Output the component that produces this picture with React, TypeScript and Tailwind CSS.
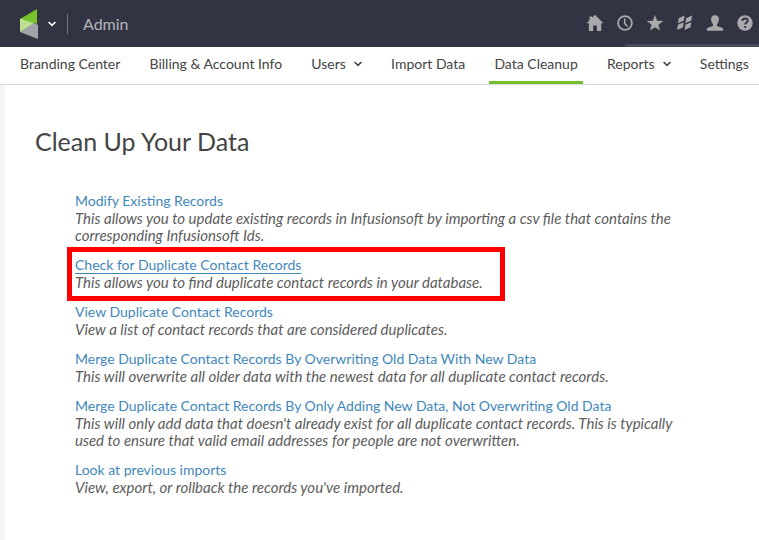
import type { ReactNode } from "react";

const navItems = [
  { label: "Branding Center" },
  { label: "Billing & Account Info" },
  { label: "Users", menu: true },
  { label: "Import Data" },
  { label: "Data Cleanup", active: true },
  { label: "Reports", menu: true },
  { label: "Settings" }
];

const actions = [
  {
    title: "Modify Existing Records",
    text: "This allows you to update existing records in Infusionsoft by importing a csv file that contains the corresponding Infusionsoft Ids."
  },
  {
    title: "Check for Duplicate Contact Records",
    text: "This allows you to find duplicate contact records in your database.",
    highlighted: true
  },
  {
    title: "View Duplicate Contact Records",
    text: "View a list of contact records that are considered duplicates."
  },
  {
    title: "Merge Duplicate Contact Records By Overwriting Old Data With New Data",
    text: "This will overwrite all older data with the newest data for all duplicate contact records."
  },
  {
    title: "Merge Duplicate Contact Records By Only Adding New Data, Not Overwriting Old Data",
    text: "This will only add data that doesn't already exist for all duplicate contact records. This is typically used to ensure that valid email addresses for people are not overwritten."
  },
  {
    title: "Look at previous imports",
    text: "View, export, or rollback the records you've imported."
  }
];

function Chevron() {
  return (
    <svg className="h-[6px] w-2 shrink-0" viewBox="0 0 8 6" fill="none" stroke="currentColor" strokeWidth="1.6" aria-hidden="true">
      <path d="M.6 1 4 4.4 7.4 1" />
    </svg>
  );
}

function Logo() {
  return (
    <svg className="h-[30px] w-[18px]" viewBox="0 0 18 30" aria-hidden="true">
      <path d="M17 0v15L0 10z" fill="#78c22b" />
      <path d="M0 23 13 14l5 1.800V30z" fill="#a3a4a9" />
      <path d="M0 9.500 14 14 0 23z" fill="#bce290" />
    </svg>
  );
}

function ToolButton({ label, children }: { label: string; children: ReactNode }) {
  return (
    <button type="button" aria-label={label} className="hover:text-white">
      <svg className="block size-[18px]" viewBox="0 0 18 18" fill="currentColor" aria-hidden="true">
        {children}
      </svg>
    </button>
  );
}

function TopBar() {
  return (
    <header className="relative flex h-[47px] items-center justify-between bg-[#323443] pl-5 pr-[5px]">
      <div className="flex items-center">
        <button type="button" aria-label="Main menu" className="flex items-center gap-[10px] text-white">
          <Logo />
          <Chevron />
        </button>
        <span className="ml-[11px] h-5 w-px bg-[#747580]" />
        <span className="ml-[15px] text-base leading-5 text-[#b5b6bc]">Admin</span>
      </div>
      <div className="flex items-center gap-3 pb-px text-[#a9a9ab]">
        <ToolButton label="Home">
          <path d="M9 .8 17.400 9.200h-2.200V17h-4.300v-5.500H7.200V17H2.900V9.200H.6L3.500 6.300V2.400H6v1.400z" />
        </ToolButton>
        <ToolButton label="Recent">
          <circle cx="9" cy="9" r="6.900" fill="none" stroke="currentColor" strokeWidth="1.700" />
          <path d="M8.700 4.500v5l2.800 2.900" fill="none" stroke="currentColor" strokeWidth="1.500" />
        </ToolButton>
        <ToolButton label="Favorites">
          <path d="m9 .9 2.100 5.800 6.100.2-4.800 3.800 1.700 5.900L9 13.200l-5.100 3.400 1.700-5.900L.8 6.900l6.100-.2z" />
        </ToolButton>
        <ToolButton label="Dashboard">
          <path d="M2.700 4.200 8.600 1.500 7.800 6.600 1.900 9.200z" />
          <path d="m10.200 4.200 5.900-2.700-.8 5.100-5.900 2.600z" />
          <path d="m1.900 10.800 5.900-2.600-.8 5.100-5.900 2.600z" />
          <path d="m9.400 10.800 5.900-2.600-.8 5.100-5.900 2.600z" />
        </ToolButton>
        <ToolButton label="My account">
          <path d="M9 1.200c2.700 0 4.100 1.800 3.900 4.400-.1 2.200-.9 3.700-1.900 4.700v1.600l5.200 1.800c.7.300 1 1 1 3.100H.8c0-2.100.3-2.800 1-3.100L7 11.900v-1.600C6 9.300 5.200 7.800 5.100 5.600 4.900 3 6.300 1.200 9 1.200z" />
        </ToolButton>
        <ToolButton label="Help">
          <circle cx="9" cy="9" r="7.700" />
          <path d="M6.400 7.100c0-1.700 1.100-2.600 2.700-2.600s2.600.8 2.600 2.200c0 1.900-2.500 1.800-2.500 3.900M9.200 12v2" fill="none" stroke="#323443" strokeWidth="1.900" />
        </ToolButton>
      </div>
      <span className="absolute bottom-0 right-0 h-[3px] w-[134px] bg-[#484959]" />
    </header>
  );
}

function Navigation() {
  return (
    <nav className="border-b border-[#d9d9d9] pl-[15px] pr-[5px]">
      <ul className="flex justify-between whitespace-nowrap text-sm text-[#444]">
        {navItems.map((item) => (
          <li key={item.label}>
            <a
              href="#"
              aria-current={item.active ? "page" : undefined}
              className={`flex h-[37px] items-center gap-2 border-b-3 px-[5px] ${item.active ? "border-[#74c02c]" : "border-transparent"}`}
            >
              {item.label}
              {item.menu && <Chevron />}
            </a>
          </li>
        ))}
      </ul>
    </nav>
  );
}

export default function App() {
  return (
    <div className="flex min-h-screen flex-col bg-white font-['Lato',sans-serif]">
      <TopBar />
      <Navigation />
      <main className="flex-1 border-l-[5px] border-[#f5f5f5] pl-[30px] pr-20 pt-10">
        <h1 className="text-[25px] leading-8 text-[#444]">Clean Up Your Data</h1>
        <ul className="mt-[35px] space-y-3 pl-10">
          {actions.map((action) => (
            <li key={action.title} className="relative">
              <h2 className="text-sm leading-[18px] text-[#3f87bb]">
                <a href="#" className={action.highlighted ? "underline underline-offset-3" : "hover:underline"}>
                  {action.title}
                </a>
              </h2>
              <p className="text-[15px] italic leading-[17px] text-[#5c5c5c]">{action.text}</p>
              {action.highlighted && (
                <span className="pointer-events-none absolute -bottom-[10px] -left-2 -top-[9px] w-[438px] border-5 border-[#fe0000]" />
              )}
            </li>
          ))}
        </ul>
      </main>
    </div>
  );
}
